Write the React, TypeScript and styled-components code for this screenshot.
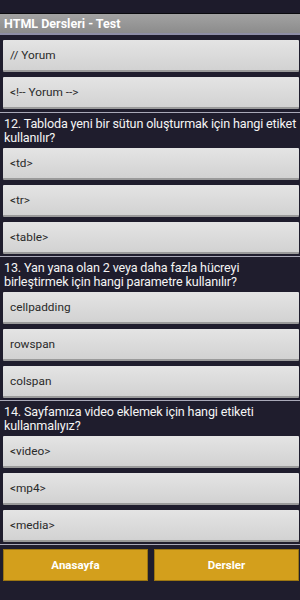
import styled, { createGlobalStyle } from 'styled-components'

const GlobalStyle = createGlobalStyle`
  html, body {
    margin: 0;
    padding: 0;
    background: #1f1d2d;
  }
  body {
    font-family: Roboto, "Liberation Sans", sans-serif;
  }
`

type Question = {
  title?: string
  options: string[]
}

const questions: Question[] = [
  { options: ['// Yorum', '<!-- Yorum -->'] },
  {
    title: '12. Tabloda yeni bir sütun oluşturmak için hangi etiket kullanılır?',
    options: ['<td>', '<tr>', '<table>'],
  },
  {
    title: '13. Yan yana olan 2 veya daha fazla hücreyi birleştirmek için hangi parametre kullanılır?',
    options: ['cellpadding', 'rowspan', 'colspan'],
  },
  {
    title: '14. Sayfamıza video eklemek için hangi etiketi kullanmalıyız?',
    options: ['<video>', '<mp4>', '<media>'],
  },
]

const Screen = styled.div`
  width: 300px;
  height: 600px;
  display: flex;
  flex-direction: column;
  background: #1f1d2d;
  overflow: hidden;
`

const StatusBar = styled.div`
  height: 13px;
  background: #1d1b2b;
  border-bottom: 1px solid #0a0a0e;
`

const TitleBar = styled.div`
  height: 19px;
  display: flex;
  align-items: center;
  padding-left: 4px;
  background: linear-gradient(to bottom, #a2a2a2, #8c8c8c);
  color: #fff;
  font-weight: 700;
  font-size: 12.5px;
  border-bottom: 2px solid #8e8ea6;
`

const Content = styled.div`
  flex: 1;
  display: flex;
  flex-direction: column;
  padding: 5px 1px 0 3px;
`

const Block = styled.div<{ $first?: boolean }>`
  display: flex;
  flex-direction: column;
  gap: 5px;
  padding-bottom: ${p => (p.$first ? '3px' : '2px')};
  border-bottom: 1px solid #a9a9b8;
  margin-bottom: 3px;
  margin-left: -3px;
  margin-right: -1px;
  padding-left: 3px;
  padding-right: 1px;
`

const QuestionText = styled.div`
  color: #f4f4f4;
  font-size: 12.6px;
  line-height: 13.5px;
  letter-spacing: -0.15px;
  padding: 1px 0 0 1px;
  margin-right: -4px;
  margin-bottom: -1px;
`

const Option = styled.div`
  height: 32px;
  box-sizing: border-box;
  display: flex;
  align-items: center;
  padding-left: 7px;
  background: linear-gradient(to bottom, #e4e4e4, #d2d2d2);
  border-bottom: 2px solid #9a9a9a;
  color: #2a2a2a;
  font-size: 11.8px;
  border-radius: 1px;
`

const ButtonRow = styled.div`
  display: flex;
  gap: 6px;
  margin-top: 1px;
`

const NavButton = styled.div`
  flex: 1;
  height: 32px;
  box-sizing: border-box;
  display: flex;
  align-items: center;
  justify-content: center;
  background: #d39f1c;
  border: 1px solid #9c7612;
  color: #fff;
  font-weight: 700;
  font-size: 11.5px;
`

export default function App() {
  return (
    <Screen>
      <GlobalStyle />
      <StatusBar />
      <TitleBar>HTML Dersleri - Test</TitleBar>
      <Content>
        {questions.map((q, i) => (
          <Block key={i} $first={i === 0}>
            {q.title && <QuestionText>{q.title}</QuestionText>}
            {q.options.map(o => (
              <Option key={o}>{o}</Option>
            ))}
          </Block>
        ))}
        <ButtonRow>
          <NavButton>Anasayfa</NavButton>
          <NavButton>Dersler</NavButton>
        </ButtonRow>
      </Content>
    </Screen>
  )
}
